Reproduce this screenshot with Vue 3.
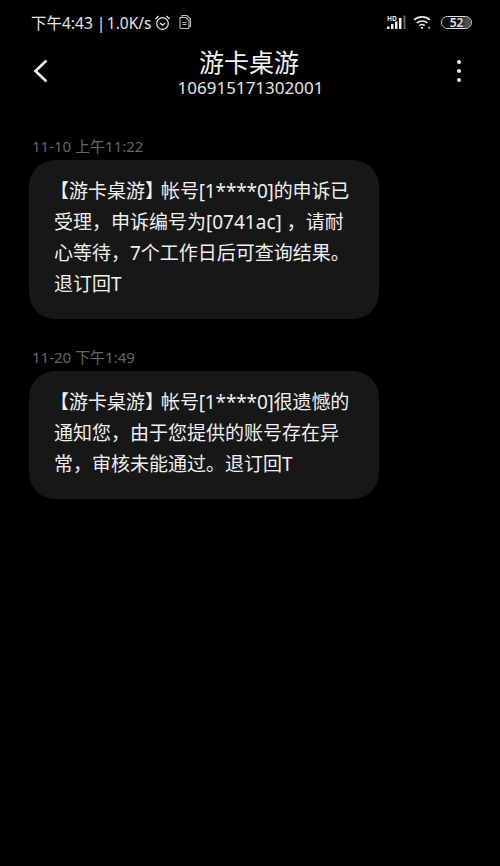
<template>
  <div class="screen">
    <div class="status-bar">
      <div class="status-left">
        <span class="status-text">下午4:43<span class="sep">|</span>1.0K/s</span>
        <svg class="alarm" width="17" height="17" viewBox="0 0 17 17" fill="none" stroke="#e6e6e6">
          <circle cx="8.5" cy="9.5" r="5.8" stroke-width="1.3" />
          <path d="M6 9l2.500 2.200L11 9" stroke-width="1.200" />
          <path d="M1.500 5L4.500 2M15.500 5L12.500 2" stroke-width="1.300" />
        </svg>
        <svg class="sim" width="14" height="16" viewBox="0 0 14 16" fill="none" stroke="#bdbdbd" stroke-width="1.100">
          <path d="M4 3.500V1.500h5l3.500 3.500v7.500H11" />
          <path d="M2 3.500h6l3 3v7a1 1 0 0 1-1 1H3a1 1 0 0 1-1-1z" />
          <path d="M4.500 8.500h4M4.500 10.500h4" />
        </svg>
      </div>
      <div class="status-right">
        <svg width="19" height="15" viewBox="0 0 19 15">
          <text x="0" y="5.500" class="hd">HD</text>
          <rect x="0" y="11.500" width="2.500" height="2.500" fill="#eee" />
          <rect x="4" y="9" width="2.500" height="5" fill="#eee" />
          <rect x="8" y="6.500" width="2.500" height="7.500" fill="#eee" />
          <rect x="12" y="3" width="2.500" height="11" fill="#eee" />
          <rect x="16.500" y="0.500" width="2" height="13.500" fill="#666" />
        </svg>
        <svg class="wifi" width="19" height="15" viewBox="0 0 21 17" fill="none" stroke="#eee" stroke-width="1.800">
          <path d="M1 5.500C6 1 14 1 19 5.500" />
          <path d="M4 9c3.500-3 8.500-3 12 0" />
          <path d="M7 12c1.800-1.500 4.200-1.500 6 0" />
          <circle cx="10" cy="14.500" r="1.300" fill="#eee" stroke="none" />
          <circle cx="18" cy="14.500" r="1.500" fill="#888" stroke="none" />
        </svg>
        <div class="battery">
          <div class="battery-fill"></div>
          <span>52</span>
        </div>
      </div>
    </div>

    <div class="header">
      <svg class="back" width="16" height="24" viewBox="0 0 16 24" fill="none" stroke="#f2f2f2" stroke-width="2.600">
        <path d="M13.500 1.500L2.500 12l11 10.500" />
      </svg>
      <div class="contact">
        <div class="name">游卡桌游</div>
        <div class="number">106915171302001</div>
      </div>
      <div class="more">
        <i></i><i></i><i></i>
      </div>
    </div>

    <div class="messages">
      <div v-for="msg in messages" :key="msg.time" class="message">
        <div class="time">{{ msg.time }}</div>
        <div class="bubble">
          <div class="line first"><span class="tag">【游卡桌游】</span><span class="rest">{{ msg.first }}</span></div>
          <div v-for="line in msg.lines" :key="line" class="line">{{ line }}</div>
        </div>
      </div>
    </div>
  </div>
</template>

<script setup>
const messages = [
  {
    time: "11-10 上午11:22",
    first: "帐号[1****0]的申诉已",
    lines: [
      "受理，申诉编号为[0741ac] ，请耐",
      "心等待，7个工作日后可查询结果。",
      "退订回T",
    ],
  },
  {
    time: "11-20 下午1:49",
    first: "帐号[1****0]很遗憾的",
    lines: [
      "通知您，由于您提供的账号存在异",
      "常，审核未能通过。退订回T",
    ],
  },
];
</script>

<style>
body {
  background: #000;
}
</style>

<style scoped>
.screen {
  width: 500px;
  height: 866px;
  background: #000;
  color: #fff;
  font-family: "Noto Sans", "Noto Sans CJK SC", sans-serif;
  overflow: hidden;
}

.status-bar {
  display: flex;
  justify-content: space-between;
  align-items: center;
  height: 44px;
  padding: 0 28px 0 31px;
}

.status-left,
.status-right {
  display: flex;
  align-items: center;
}

.status-text {
  font-size: 15.500px;
  color: #e6e6e6;
  white-space: nowrap;
}

.sep {
  margin: 0 1.500px 0 4px;
}

.alarm {
  margin-left: 2.500px;
}

.sim {
  margin-left: 7px;
}

.hd {
  font-size: 6.500px;
  font-weight: 700;
  fill: #eee;
}

.wifi {
  margin-left: 7px;
}

.battery {
  position: relative;
  width: 29px;
  height: 11px;
  margin-left: 9px;
  border: 1px solid #ddd;
  border-radius: 7px;
  font-size: 12px;
  font-weight: 600;
  line-height: 11px;
  text-align: center;
  color: #e6e6e6;
}

.battery-fill {
  position: absolute;
  left: 0;
  top: 0;
  bottom: 0;
  width: 100%;
  background: linear-gradient(to right, #111 60%, #555 85%);
  border-radius: 7px;
}

.battery span {
  position: relative;
}

.header {
  display: grid;
  grid-template-columns: 1fr auto 1fr;
  align-items: center;
  padding: 0 39px 0 33px;
  height: 54px;
}

.contact {
  text-align: center;
  margin-left: 4px;
}

.name {
  font-size: 25px;
  line-height: 33px;
  color: #f2f2f2;
}

.number {
  font-size: 17px;
  line-height: 18px;
  color: #e6e6e6;
  padding-left: 3px;
}

.more {
  display: flex;
  flex-direction: column;
  gap: 5px;
  justify-self: end;
}

.more i {
  display: block;
  width: 4px;
  height: 4px;
  border-radius: 50%;
  background: #eee;
}

.messages {
  padding: 38px 0 0 29px;
  display: flex;
  flex-direction: column;
  gap: 28px;
}

.time {
  font-size: 15px;
  line-height: 20px;
  color: #666;
  padding-left: 3px;
  margin-bottom: 4px;
}

.bubble {
  width: 350px;
  box-sizing: border-box;
  padding: 16px 0 19px 25px;
  background: #171717;
  border-radius: 26px;
}

.line {
  font-size: 19px;
  line-height: 31px;
  color: #f0f0f0;
  white-space: nowrap;
}

.first {
  text-indent: -4px;
}

.tag {
  margin-right: -3px;
}

.rest {
  letter-spacing: -0.14px;
}
</style>
